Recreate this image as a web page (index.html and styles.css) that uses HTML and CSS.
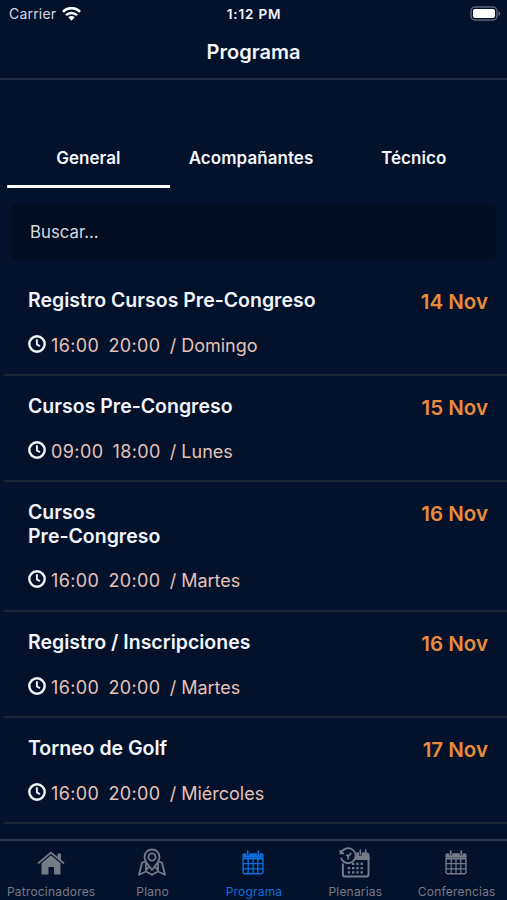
FILE: index.html
```html
<!DOCTYPE html>
<html lang="es">
<head>
    <meta charset="UTF-8">
    <meta name="viewport" content="width=device-width, initial-scale=1.0">
    <title>Programa</title>
    <link rel="stylesheet" href="styles.css">
</head>
<body>

    <!-- Shared icons -->
    <svg class="sprite" width="0" height="0">
        <symbol id="clock" viewBox="0 0 18 18">
            <circle cx="9" cy="9" r="7.7" fill="none" stroke="currentColor" stroke-width="2.4"/>
            <path d="M8.9 4.2V9.4L12 11.2" fill="none" stroke="currentColor" stroke-width="1.9"/>
        </symbol>
        <symbol id="calendar" viewBox="0 0 24 26">
            <path d="M1 5.5Q1 3.5 3 3.5H5V5.5H8V3.5H16V5.5H19V3.5H21Q23 3.5 23 5.5V8H1Z" fill="currentColor"/>
            <path d="M6.5 1V5M17.5 1V5" stroke="currentColor" stroke-width="1.7" stroke-linecap="round"/>
            <path d="M1.7 9V23Q1.7 24.7 3.4 24.7H20.6Q22.3 24.7 22.3 23V9Z" fill="none" stroke="currentColor" stroke-width="1.5"/>
            <path d="M2 14.2H22M2 19.5H22M7 9V24.5M12 9V24.5M17 9V24.5" fill="none" stroke="currentColor" stroke-width="1.3"/>
        </symbol>
    </svg>

    <header>
        <div class="status-bar">
            <div class="carrier">
                <span>Carrier</span>
                <svg width="19" height="14" viewBox="0 0 19 14">
                    <g fill="none" stroke="#fff" stroke-width="2.6">
                        <path d="M1 4.8A12 12 0 0 1 18 4.8"/>
                        <path d="M4 8.2A7.8 7.8 0 0 1 15 8.2"/>
                    </g>
                    <path d="M6.3 10.3A4.6 4.6 0 0 1 12.7 10.3L9.5 13.7Z" fill="#fff"/>
                </svg>
            </div>
            <span class="clock-time">1:12 PM</span>
            <svg class="battery" width="31" height="15" viewBox="0 0 31 15">
                <rect x="1" y="1" width="26" height="13" rx="4" fill="none" stroke="#5d6478" stroke-width="1.4"/>
                <rect x="3" y="3" width="22" height="9" rx="2" fill="#fff"/>
                <path d="M28.5 5Q30.3 6 30.3 7.5T28.5 10Z" fill="#5d6478"/>
            </svg>
        </div>
        <h1>Programa</h1>
    </header>

    <div class="tabs">
        <a class="tab active">General</a>
        <a class="tab">Acompañantes</a>
        <a class="tab">Técnico</a>
    </div>

    <div class="search">Buscar...</div>

    <main class="event-list">
        <div class="event">
            <div class="event-top">
                <h2>Registro Cursos Pre-Congreso</h2>
                <span class="date">14 Nov</span>
            </div>
            <div class="event-time">
                <svg><use href="#clock"/></svg>
                <span class="hour">16:00</span><span class="hour">20:00</span><span>/ Domingo</span>
            </div>
        </div>
        <div class="event">
            <div class="event-top">
                <h2>Cursos Pre-Congreso</h2>
                <span class="date">15 Nov</span>
            </div>
            <div class="event-time">
                <svg><use href="#clock"/></svg>
                <span class="hour">09:00</span><span class="hour">18:00</span><span>/ Lunes</span>
            </div>
        </div>
        <div class="event">
            <div class="event-top">
                <h2>Cursos<br>Pre-Congreso</h2>
                <span class="date">16 Nov</span>
            </div>
            <div class="event-time">
                <svg><use href="#clock"/></svg>
                <span class="hour">16:00</span><span class="hour">20:00</span><span>/ Martes</span>
            </div>
        </div>
        <div class="event">
            <div class="event-top">
                <h2>Registro / Inscripciones</h2>
                <span class="date">16 Nov</span>
            </div>
            <div class="event-time">
                <svg><use href="#clock"/></svg>
                <span class="hour">16:00</span><span class="hour">20:00</span><span>/ Martes</span>
            </div>
        </div>
        <div class="event">
            <div class="event-top">
                <h2>Torneo de Golf</h2>
                <span class="date">17 Nov</span>
            </div>
            <div class="event-time">
                <svg><use href="#clock"/></svg>
                <span class="hour">16:00</span><span class="hour">20:00</span><span>/ Miércoles</span>
            </div>
        </div>
    </main>

    <nav class="nav-bar">
        <a>
            <svg width="28" height="30" viewBox="0 0 28 30">
                <path d="M1 16L14 5L27 16" fill="none" stroke="currentColor" stroke-width="1.7"/>
                <path d="M20.5 6H24V13L20.5 10Z" fill="currentColor"/>
                <path d="M4.5 15.8L14 7.8L23.5 15.8V27H17V19.5H11.5V27H4.5Z" fill="currentColor"/>
            </svg>
            <span>Patrocinadores</span>
        </a>
        <a>
            <svg width="28" height="30" viewBox="0 0 28 30" fill="none" stroke="currentColor" stroke-width="1.8" stroke-linejoin="round">
                <path d="M14 22.5C11 18 6.5 14.5 6.5 9.5A7.5 7.5 0 0 1 21.5 9.5C21.5 14.5 17 18 14 22.5Z"/>
                <circle cx="14" cy="9.5" r="3.6"/>
                <path d="M7 14L4 15.3L1 27.3L8 24L14 27.3L20 24L27 27.3L24 15.3L21 14M8 15V24M20 15V24M8 23L11 19M20 23L17 19"/>
            </svg>
            <span>Plano</span>
        </a>
        <a class="active">
            <svg class="calendar"><use href="#calendar"/></svg>
            <span>Programa</span>
        </a>
        <a>
            <svg width="32" height="32" viewBox="0 0 32 32">
                <path d="M17.5 5.5H20V9H23V5.5H27Q31 5.5 31 9V13.5H15Q17.8 10 17.5 5.5Z" fill="currentColor"/>
                <path d="M21.5 3V8M27 3V8" stroke="currentColor" stroke-width="1.6" stroke-linecap="round"/>
                <path d="M3.5 17V28Q3.5 30.5 6 30.5H27.5Q30 30.5 30 28V10" fill="none" stroke="currentColor" stroke-width="2"/>
                <path d="M2 5.5A7.7 7.7 0 1 1 1.5 11M1 3V6.5H4.8M9 9.5L12 6M9 9.5V13M9 9.5L7 8" fill="none" stroke="currentColor" stroke-width="1.8"/>
                <path d="M12.9 17.5H26M8.5 21.8H26M8.5 26.1H26" stroke="currentColor" stroke-width="2.3" stroke-dasharray="2.4 2"/>
            </svg>
            <span>Plenarias</span>
        </a>
        <a>
            <svg class="calendar"><use href="#calendar"/></svg>
            <span>Conferencias</span>
        </a>
    </nav>

</body>
</html>
```
FILE: styles.css
```css
* {
    box-sizing: border-box;
}

body {
    font-family: 'Inter', sans-serif;
    margin: 0;
    height: 900px;
    background-color: #03112b;
    color: #f2f6fc;
    overflow: hidden;
    display: flex;
    flex-direction: column;
}

.sprite {
    display: none;
}

header {
    height: 80px;
    border-bottom: 2px solid #1e2b43;
}

.status-bar {
    display: grid;
    grid-template-columns: 1fr auto 1fr;
    align-items: center;
    height: 27px;
    padding: 0 6px 0 9px;
    font-size: 14px;
}

.carrier {
    display: flex;
    align-items: center;
    gap: 6px;
    color: #d3d9e3;
    letter-spacing: 0.2px;
}

.clock-time {
    font-weight: 600;
    font-size: 13.5px;
    letter-spacing: 0.8px;
    margin-right: 2px;
}

.battery {
    justify-self: end;
}

h1 {
    margin: 12px 0 0;
    font-size: 20px;
    line-height: 26px;
    font-weight: 600;
    text-align: center;
}

.tabs {
    display: flex;
    height: 60px;
    margin: 48px 12px 0 7px;
}

.tab {
    flex: 1;
    padding-top: 19px;
    font-size: 17px;
    line-height: 22px;
    font-weight: 600;
    letter-spacing: 0.05px;
    text-align: center;
}

.tab.active {
    border-bottom: 3px solid #fff;
}

.search {
    height: 54px;
    margin: 17px 11px 11px 12px;
    padding: 0 18px;
    background: #020e1f;
    border-radius: 3px;
    font-size: 16.8px;
    line-height: 55px;
    color: #d5d9df;
}

.event-list {
    flex: 1;
    padding-left: 4px;
}

.event {
    padding: 19px 19px 17px 24px;
    border-bottom: 2px solid #1a2432;
}

.event-top {
    display: flex;
    justify-content: space-between;
}

.event h2 {
    margin: 0;
    font-size: 19.5px;
    line-height: 23.2px;
    font-weight: 600;
}

.date {
    font-size: 20.5px;
    line-height: 25px;
    height: 23px;
    font-weight: 600;
    color: #e98b3d;
}

.event-time {
    display: flex;
    align-items: center;
    height: 24px;
    margin-top: 21px;
    font-size: 18px;
    color: #e6c2b8;
}

.event-time svg {
    width: 18px;
    height: 18px;
    margin: -3px 5px 0 0;
    color: #f2f6fc;
}

.event-time .hour {
    letter-spacing: 0.4px;
    margin-right: 9px;
}

.nav-bar {
    display: flex;
    height: 61px;
    border-top: 2px solid #2c3749;
    background: #03112b;
}

.nav-bar a {
    width: 20%;
    display: flex;
    flex-direction: column;
    align-items: center;
    color: #747b87;
    font-size: 12px;
}

.nav-bar a.active {
    color: #0a6fdc;
}

.nav-bar svg {
    height: 32px;
    margin-top: 6px;
}

.nav-bar .calendar {
    width: 24px;
    height: 26px;
    margin: 9px 0 3px;
}

.nav-bar span {
    line-height: 16px;
    margin-top: 6px;
    margin-left: 1px;
    letter-spacing: 0.2px;
}
```
